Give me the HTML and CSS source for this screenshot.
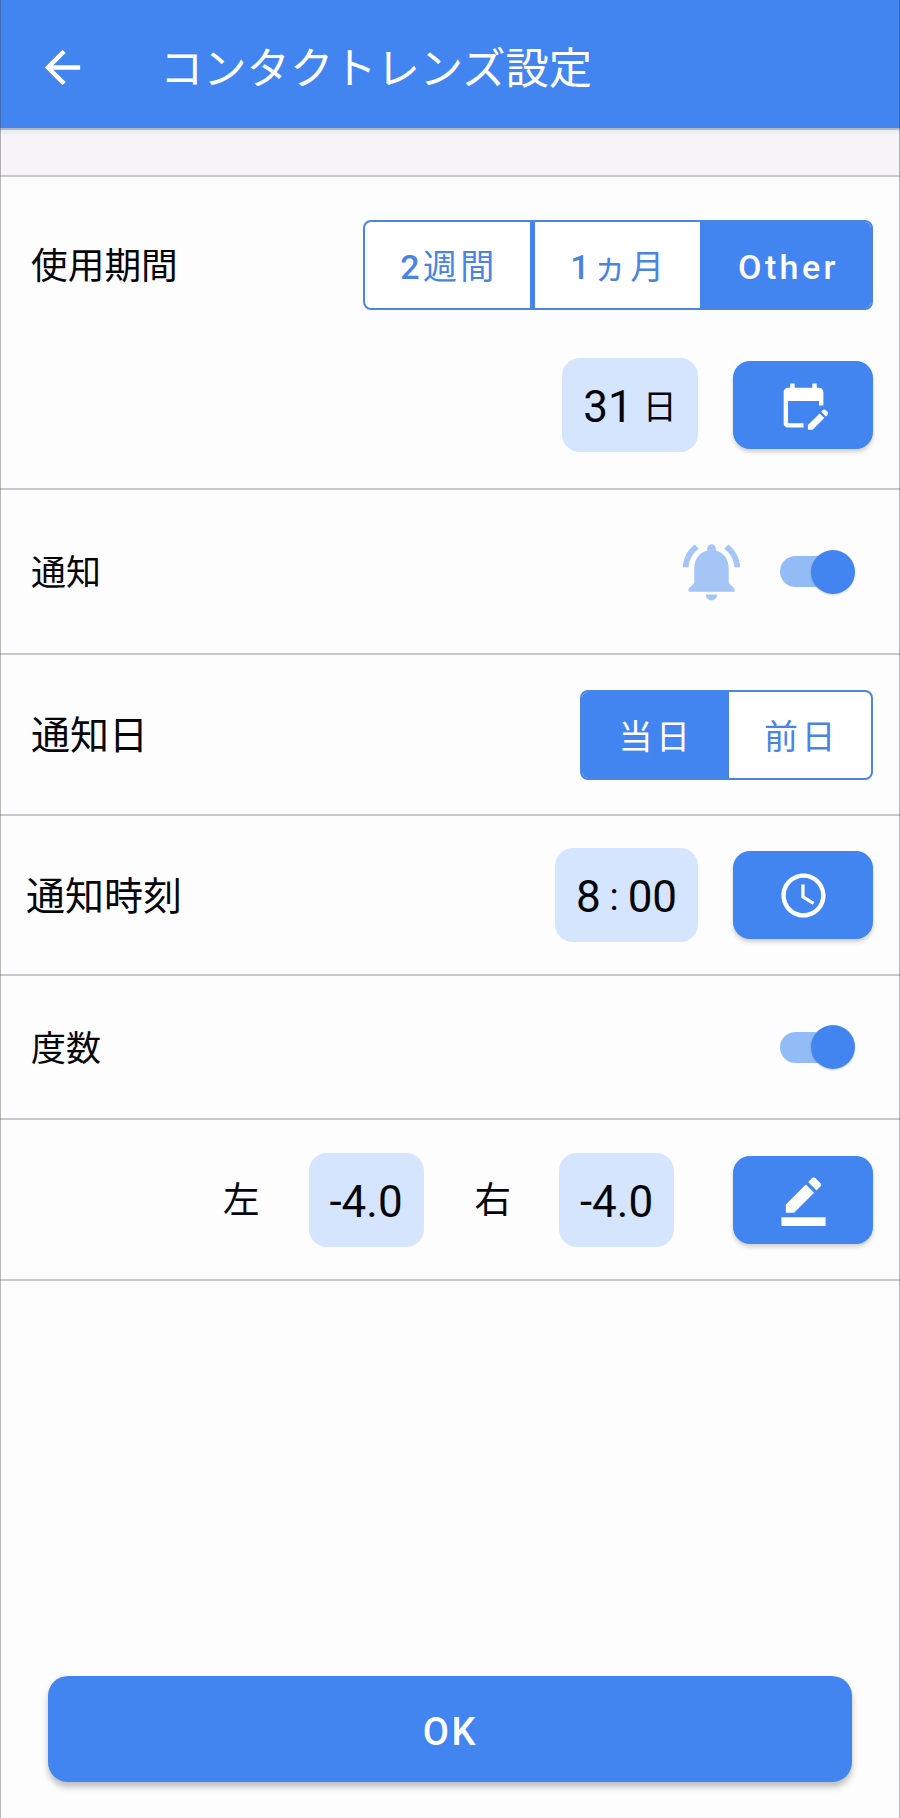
FILE: index.html
```html
<!DOCTYPE html>
<html lang="ja">
<head>
<meta charset="utf-8">
<title>コンタクトレンズ設定</title>
<link rel="stylesheet" href="styles.css">
</head>
<body>
<div class="screen">
  <header class="appbar">
    <svg class="back" viewBox="0 0 24 24"><path d="M20 11H7.83l5.59-5.59L12 4l-8 8 8 8 1.41-1.41L7.83 13H20v-2z"/></svg>
    <h1 class="title">コンタクトレンズ設定</h1>
  </header>
  <div class="strip"></div>

  <section class="row row-period">
    <div class="line">
      <span class="label label-period">使用期間</span>
      <div class="segments">
        <button class="seg seg-week">2<span class="kanji">週間</span></button>
        <button class="seg seg-month">1<span class="kanji">ヵ月</span></button>
        <button class="seg seg-other on">Other</button>
      </div>
    </div>
    <div class="line line-days">
      <span class="chip chip-days">31<span class="unit">日</span></span>
      <button class="action"><svg class="icon" viewBox="0 0 24 24"><path d="M12 22H5a2 2 0 0 1-2-2L3.010 6c0-1.100.880-2 1.990-2h1V2h2v2h8V2h2v2h1c1.100 0 2 .9 2 2v6h-2v-2H5v10h7v2zm10.130-5.010l.71-.71a1 1 0 0 0 0-1.410l-.71-.71a1 1 0 0 0-1.410 0l-.71.71 2.120 2.120zm-.71.71l-5.300 5.300H14v-2.120l5.300-5.300 2.120 2.120z"/></svg></button>
    </div>
  </section>

  <section class="row row-notify">
    <span class="label label-small">通知</span>
    <svg class="bell" viewBox="0 0 24 24"><path d="M7.580 4.080L6.150 2.650C3.750 4.480 2.170 7.300 2.030 10.500h2c.15-2.650 1.510-4.970 3.550-6.420zM19.970 10.500h2c-.15-3.200-1.730-6.020-4.120-7.850l-1.420 1.430c2.020 1.450 3.390 3.770 3.540 6.420zM18 11c0-3.070-1.640-5.640-4.500-6.320V4c0-.83-.67-1.500-1.500-1.500s-1.500.67-1.500 1.500v.68C7.630 5.360 6 7.920 6 11v5l-2 2v1h16v-1l-2-2v-5zM12 22c1.100 0 2-.9 2-2h-4c0 1.100.9 2 2 2z"/></svg>
    <span class="switch"><span class="knob"></span></span>
  </section>

  <section class="row row-day">
    <span class="label label-day">通知日</span>
    <div class="segments">
      <button class="seg seg-today on"><span class="kanji">当日</span></button>
      <button class="seg seg-before"><span class="kanji">前日</span></button>
    </div>
  </section>

  <section class="row row-time">
    <span class="label label-time">通知時刻</span>
    <span class="chip chip-time">8<span class="colon">:</span>00</span>
    <button class="action"><svg class="icon" viewBox="0 0 24 24"><path d="M11.990 2C6.470 2 2 6.480 2 12s4.470 10 9.990 10C17.520 22 22 17.520 22 12S17.520 2 11.990 2zM12 20c-4.420 0-8-3.580-8-8s3.580-8 8-8 8 3.580 8 8-3.580 8-8 8zm.5-13H11v6l5.250 3.150.75-1.230-4.500-2.670z"/></svg></button>
  </section>

  <section class="row row-power">
    <span class="label label-small">度数</span>
    <span class="switch"><span class="knob"></span></span>
  </section>

  <section class="row row-eyes">
    <span class="eye eye-left">左</span>
    <span class="chip chip-eye">-4.0</span>
    <span class="eye eye-right">右</span>
    <span class="chip chip-eye chip-last">-4.0</span>
    <button class="action"><svg class="icon" viewBox="0 0 24 24"><path d="M22 24H2v-4h20v4zM13.060 5.190l3.750 3.750L7.750 18H4v-3.750l9.060-9.060zM17.880 7.870l-3.750-3.750 1.830-1.830c.39-.39 1.020-.39 1.410 0l2.340 2.340c.39.39.39 1.020 0 1.410l-1.830 1.830z"/></svg></button>
  </section>

  <footer class="footer"><button class="ok">OK</button></footer>
</div>
</body>
</html>
```

FILE: styles.css
```css
* { box-sizing: border-box; }

body {
  margin: 0;
  background: #fefdfe;
  color: #05050a;
  font-family: Roboto, "Noto Sans CJK JP", sans-serif;
}

button {
  border: 0;
  padding: 0;
  font: inherit;
}

.screen {
  position: relative;
  display: flex;
  flex-direction: column;
  width: 900px;
  height: 1818px;
  overflow: hidden;
}

.screen::after {
  content: "";
  position: absolute;
  inset: 0;
  border-left: 1px solid rgba(60, 55, 75, 0.35);
  border-right: 1px solid rgba(60, 55, 75, 0.35);
  pointer-events: none;
}

.appbar {
  display: flex;
  align-items: center;
  height: 128px;
  padding: 7px 0 0 36px;
  background: #4285f0;
  color: #fff;
}

.back {
  width: 53px;
  height: 53px;
  fill: #fff;
}

.title {
  margin: 0 0 0 71px;
  padding-top: 4px;
  font-size: 43.3px;
  font-weight: 400;
  line-height: 64px;
}

.strip {
  height: 49px;
  background: #f6f4f8;
  border-bottom: 2px solid #cac8cc;
  box-shadow: inset 0 2px 1px #b3b6c2, inset 0 6px 2px #eceef2;
}

.row {
  display: flex;
  align-items: center;
  flex-shrink: 0;
  padding: 0 27px 0 31px;
  border-bottom: 2px solid #cac8cc;
}

.row-period { flex-direction: column; height: 313px; padding-top: 43px; }
.row-notify { height: 165px; }
.row-day { height: 161px; }
.row-time { height: 160px; padding-left: 26px; }
.row-power { height: 144px; }
.row-eyes { height: 161px; justify-content: flex-end; }

.line {
  display: flex;
  align-items: center;
  width: 100%;
  height: 90px;
}

.line-days { height: 94px; margin-top: 48px; justify-content: flex-end; }

.label { margin-right: auto; padding-top: 4px; line-height: 1; white-space: nowrap; }
.label-period { font-size: 36.7px; }
.label-small { font-size: 35px; }
.label-day { font-size: 39px; }
.label-time { font-size: 39px; }

.segments {
  display: flex;
  height: 90px;
  border: 2px solid #4a86e0;
  border-radius: 8px;
  overflow: hidden;
  background: #fff;
}

.seg {
  padding: 4px 0 0 3px;
  background: transparent;
  color: #4a84e2;
  font-size: 34px;
  font-weight: 500;
  letter-spacing: 3.4px;
  line-height: 1;
}

.kanji { font-weight: 400; }

.seg.on { background: #4285f0; color: #fff; }
.seg-week { width: 170px; border-right: 5px solid #4285f0; }
.seg-month { width: 165px; }
.seg-other { width: 171px; padding-left: 6px; }
.seg-today { width: 147px; padding-left: 1px; }
.seg-before { width: 142px; }

.chip {
  display: flex;
  align-items: center;
  justify-content: center;
  height: 94px;
  margin-right: 35px;
  padding-top: 4px;
  border-radius: 18px;
  background: #d4e5fd;
  font-size: 44px;
  line-height: 1;
}

.chip-days { width: 136px; }
.chip-time { width: 143px; }
.chip-eye { width: 115px; margin-right: 0; }
.chip-last { margin-right: 59px; }
.unit { margin-left: 10px; font-size: 34px; }
.colon { width: 27px; text-align: center; font-size: 38px; }

.eye { padding-top: 4px; font-size: 36.5px; line-height: 1; }
.eye-left { margin-right: 49px; }
.eye-right { margin: 0 48px 0 51px; }

.action {
  display: flex;
  align-items: center;
  justify-content: center;
  width: 140px;
  height: 88px;
  border-radius: 17px;
  background: #4285f0;
  box-shadow: 0 3px 4px rgba(0, 0, 0, 0.18);
}

.icon { width: 53px; height: 53px; fill: #fff; }

.bell {
  width: 69px;
  height: 69px;
  margin-right: 34px;
  fill: #a6c5f7;
}

.switch {
  display: flex;
  justify-content: flex-end;
  align-items: center;
  width: 75px;
  height: 31px;
  margin-right: 18px;
  border-radius: 16px;
  background: linear-gradient(90deg, #93bbf6 60px, transparent 60px);
}

.knob {
  flex-shrink: 0;
  width: 44px;
  height: 44px;
  border-radius: 50%;
  background: #4285f0;
  box-shadow: 0 1px 2px rgba(0, 0, 0, 0.18);
}

.footer {
  margin-top: auto;
  padding: 0 48px 36px;
}

.ok {
  display: block;
  width: 100%;
  height: 106px;
  padding: 5px 0 0 1px;
  border-radius: 20px;
  background: #4285f0;
  box-shadow: 0 5px 6px rgba(0, 0, 0, 0.25);
  color: #fff;
  font-size: 38px;
  font-weight: 500;
  letter-spacing: 2.6px;
}
```
